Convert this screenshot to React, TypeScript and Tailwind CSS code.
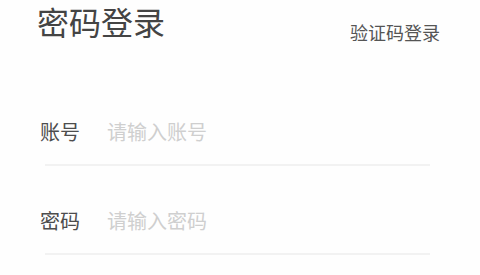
import React from "react";

const font = { fontFamily: '"Noto Sans CJK SC", "Noto Sans", sans-serif' };

function Field({ label, placeholder }: { label: string; placeholder: string }) {
  return (
    <div className="flex flex-col">
      <div className="flex items-center pl-[40px] h-[24px]">
        <span className="text-[20px] leading-[24px] text-[#4d4d4d] w-[67px]">{label}</span>
        <span className="text-[20px] leading-[24px] text-[#cfcfcf]">{placeholder}</span>
      </div>
      <div className="ml-[45px] w-[385px] h-[2px] bg-[#f2f2f2] mt-[20px]" />
    </div>
  );
}

export default function App() {
  return (
    <div className="w-[480px] h-[275px] bg-[#fefefe] overflow-hidden" style={font}>
      <div className="flex items-start justify-between pl-[37px] pr-[40px]">
        <h1 className="text-[32px] leading-[42px] font-normal text-[#444]">密码登录</h1>
        <span className="text-[18px] leading-[22px] text-[#555] mt-[21px]">验证码登录</span>
      </div>
      <div className="mt-[77px] flex flex-col gap-[43px]">
        <Field label="账号" placeholder="请输入账号" />
        <Field label="密码" placeholder="请输入密码" />
      </div>
    </div>
  );
}
